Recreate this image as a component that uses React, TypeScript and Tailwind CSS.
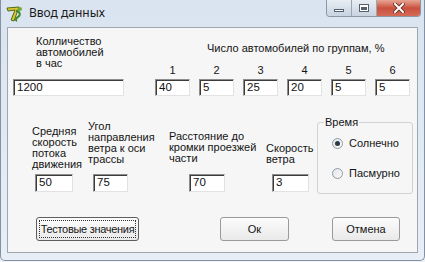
import React from 'react';

const FONT = { fontFamily: '"Liberation Sans", Arial, sans-serif' };

const Field = ({ value, className }: { value: string; className: string }) => (
  <div
    className={`bg-white border border-[#8d8d8d] border-r-[#e2e2e2] border-b-[#e2e2e2] shadow-[inset_1px_1px_0_#3c3c3c] pl-[3px] text-[11.5px] leading-[15px] text-[#111] ${className}`}
  >
    {value}
  </div>
);

const Radio = ({ checked, label }: { checked?: boolean; label: string }) => (
  <div className="flex items-center h-[12px]">
    <span className="w-[11px] h-[11px] rounded-full border border-[#8f9aa3] bg-gradient-to-br from-[#e3e5e7] to-[#fafafa] flex items-center justify-center">
      {checked && <span className="w-[5px] h-[5px] rounded-full bg-[#2c3a44]" />}
    </span>
    <span className="ml-[6px]">{label}</span>
  </div>
);

const AppIcon = () => (
  <svg width="18" height="18" viewBox="0 0 18 18">
    <path d="M2 3 L14 2 L9 16 L6 15 L10 5 L3 6 Z" fill="#d9c531" stroke="#4f6b18" strokeWidth="1" />
    <path d="M11 6 C15 6 16 10 13 12 C11 13 10 15 12 16" fill="none" stroke="#3e8a2a" strokeWidth="2" />
    <circle cx="15" cy="4" r="2" fill="#6fae3a" />
  </svg>
);

const App: React.FC = () => {
  return (
    <div className="w-[425px] h-[262px] bg-[#eef2f7] overflow-hidden" style={FONT}>
      <div className="h-[261px] flex flex-col bg-gradient-to-b from-[#d9e4f0] to-[#e8eef6] border border-t-0 border-[#8392a3] rounded-b-[5px]">
        {/* Title bar */}
        <div className="h-[26px] flex items-start shrink-0">
          <div className="ml-[4px] mt-[5px]">
            <AppIcon />
          </div>
          <span
            className="ml-[6px] mt-[6px] text-[12px] leading-[14px] text-[#1b1b1b]"
            style={{ fontFamily: '"Noto Sans", "Open Sans", sans-serif' }}
          >
            Ввод данных
          </span>
          <div className="ml-auto mr-[3px] flex h-[17px] border border-t-0 border-[#8a96a4] rounded-b-[4px] overflow-hidden">
            <div className="w-[25px] bg-gradient-to-b from-[#e9eef4] to-[#c7d3e0] flex items-end justify-center pb-[4px] border-r border-[#9aa6b3]">
              <span className="w-[10px] h-[3px] bg-white border border-[#55606c]" />
            </div>
            <div className="w-[25px] bg-gradient-to-b from-[#e9eef4] to-[#c7d3e0] flex items-center justify-center border-r border-[#9aa6b3]">
              <span className="w-[10px] h-[8px] bg-white border border-[#55606c] flex items-center justify-center">
                <span className="w-[6px] h-[3px] border border-[#55606c] border-t-2" />
              </span>
            </div>
            <div className="w-[43px] bg-gradient-to-b from-[#e6a594] via-[#c9503e] to-[#d46a55] flex items-center justify-center">
              <svg width="12" height="10" viewBox="0 0 12 10">
                <path d="M2 1 L10 9 M10 1 L2 9" stroke="#5a2a22" strokeWidth="3.6" strokeLinecap="square" />
                <path d="M2 1 L10 9 M10 1 L2 9" stroke="#fff" strokeWidth="2" strokeLinecap="square" />
              </svg>
            </div>
          </div>
        </div>

        {/* Client area */}
        <div className="mx-[6px] h-[226px] mt-[1px] bg-[#f6f6f6] border border-[#9ea7b0] text-[11px] leading-[11px] text-[#141414] flex flex-col">
          {/* Top row */}
          <div className="flex h-[68px]">
            <div className="ml-[5px] w-[111px] flex flex-col">
              <div className="pl-[23px] pt-[8px]">
                Колличество
                <br />
                автомобилей
                <br />в час
              </div>
              <Field value="1200" className="mt-auto h-[17px] w-[111px]" />
            </div>
            <div className="ml-[31px] flex flex-col">
              <div className="pl-[52px] mt-[14px] leading-[12px] whitespace-nowrap">
                Число автомобилей по группам, %
              </div>
              <div className="flex gap-[9px] mt-[10px] leading-[12px]">
                {['1', '2', '3', '4', '5', '6'].map((n) => (
                  <span key={n} className="w-[35px] text-center">
                    {n}
                  </span>
                ))}
              </div>
              <div className="flex gap-[9px] mt-auto">
                {['40', '5', '25', '20', '5', '5'].map((v, i) => (
                  <Field key={i} value={v} className="h-[17px] w-[35px]" />
                ))}
              </div>
            </div>
          </div>

          {/* Middle row */}
          <div className="flex items-start h-[98px]">
            <div className="ml-[24px] w-[50px] h-[96px] flex flex-col">
              <div className="pt-[30px] whitespace-nowrap">
                Средняя
                <br />
                скорость
                <br />
                потока
                <br />
                движения
              </div>
              <Field value="50" className="mt-auto ml-[3px] h-[18px] w-[38px]" />
            </div>
            <div className="ml-[6px] w-[62px] h-[96px] flex flex-col">
              <div className="pt-[25px] whitespace-nowrap">
                Угол
                <br />
                направления
                <br />
                ветра к оси
                <br />
                трассы
              </div>
              <Field value="75" className="mt-auto ml-[5px] h-[18px] w-[35px]" />
            </div>
            <div className="ml-[19px] w-[92px] h-[96px] flex flex-col">
              <div className="pt-[35px] whitespace-nowrap">
                Расстояние до
                <br />
                кромки проезжей
                <br />
                части
              </div>
              <Field value="70" className="mt-auto ml-[20px] h-[18px] w-[36px]" />
            </div>
            <div className="ml-[5px] w-[46px] h-[96px] flex flex-col">
              <div className="pt-[47px] whitespace-nowrap">
                Скорость
                <br />
                ветра
              </div>
              <Field value="3" className="mt-auto ml-[6px] h-[18px] w-[37px]" />
            </div>
            <fieldset className="ml-[5px] mt-[20px] w-[96px] h-[78px] border border-[#cfd3d6] rounded-[3px] px-[6px]">
              <legend className="leading-[12px] px-[1px]">Время</legend>
              <div className="pl-[8px] pt-[9px] flex flex-col gap-[18px]">
                <Radio checked label="Солнечно" />
                <Radio label="Пасмурно" />
              </div>
            </fieldset>
          </div>

          {/* Buttons */}
          <div className="flex mt-[23px]">
            <button className="ml-[28px] w-[103px] h-[24px] rounded-[3px] border border-[#5e5e5e] bg-gradient-to-b from-[#fcfcfc] to-[#e9e9e9] p-[2px]">
              <span className="block h-full border border-dotted border-[#333] leading-[17px] whitespace-nowrap tracking-[-0.3px]">
                Тестовые значения
              </span>
            </button>
            <button className="ml-[81px] w-[69px] h-[24px] rounded-[3px] border border-[#9a9a9a] bg-gradient-to-b from-[#fcfcfc] to-[#e9e9e9]">
              Ок
            </button>
            <button className="ml-[43px] w-[68px] h-[24px] rounded-[3px] border border-[#9a9a9a] bg-gradient-to-b from-[#fcfcfc] to-[#e9e9e9]">
              Отмена
            </button>
          </div>
        </div>
      </div>
    </div>
  );
};

export default App;
